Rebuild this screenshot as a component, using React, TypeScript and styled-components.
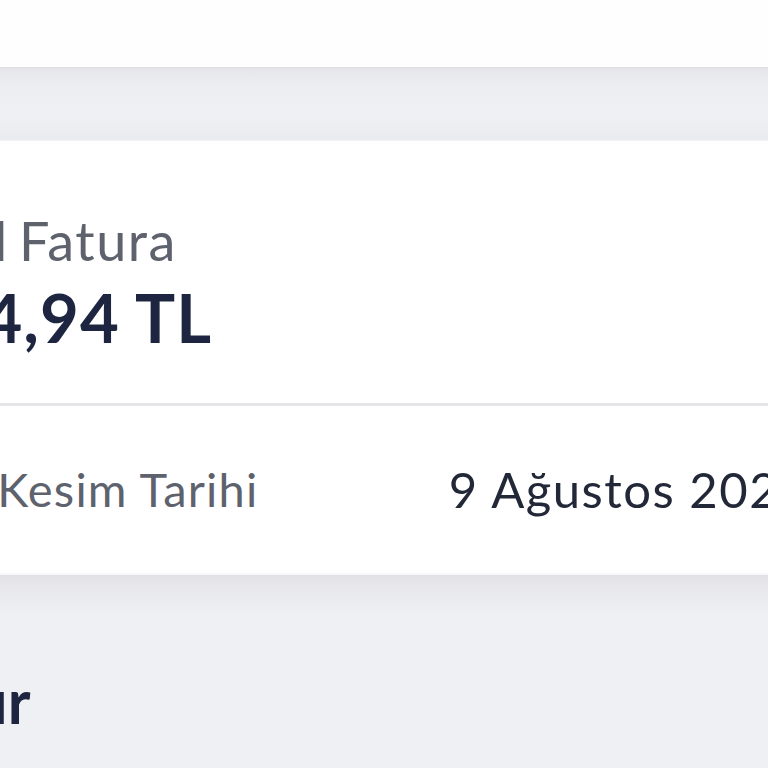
import styled, { createGlobalStyle } from "styled-components"

const Global = createGlobalStyle`
  html, body {
    margin: 0;
    padding: 0;
    background: #fefefe;
    overflow: hidden;
  }
  body {
    font-family: Lato, "Noto Sans", sans-serif;
  }
`

const App = () => {
  return (
    <>
      <Global />
      <Page>
        <Screen>
          <Header />
          <Band />
          <Card>
            <Summary>
              <Title>Güncel Fatura</Title>
              <Amount>1.254,94 TL</Amount>
            </Summary>
            <Divider />
            <Row>
              <Label>Hesap Kesim Tarihi</Label>
              <Value>9 Ağustos 2023</Value>
            </Row>
          </Card>
          <Section>
            <Heading>Hazır</Heading>
          </Section>
        </Screen>
      </Page>
    </>
  )
}

export default App

const Page = styled.div`
  width: 768px;
  height: 768px;
  overflow: hidden;
`

const Screen = styled.div`
  width: 985px;
  margin-left: -170px;
  display: flex;
  flex-direction: column;
`

const Header = styled.div`
  height: 67px;
  background: #fefefe;
`

const Band = styled.div`
  height: 74px;
  background: linear-gradient(#dcdce2 0px, #e6e6eb 2px, #eceef2 20px, #eff0f4 50px, #eaebee 72px, #f3f3f5 74px);
`

const Card = styled.div`
  background: #ffffff;
  display: flex;
  flex-direction: column;
`

const Summary = styled.div`
  height: 262px;
  box-sizing: border-box;
  padding: 68px 18px 0 17px;
  display: flex;
  flex-direction: column;
  gap: 3px;
`

const Title = styled.div`
  margin-left: -13px;
  font-size: 54px;
  line-height: 1.2;
  letter-spacing: 1.5px;
  word-spacing: -5px;
  color: #5d626d;
  white-space: nowrap;
`

const Amount = styled.div`
  font-size: 67px;
  line-height: 1.2;
  font-weight: 700;
  letter-spacing: 1px;
  color: #1d2540;
  white-space: nowrap;
`

const Divider = styled.div`
  height: 3px;
  background: #e5e5e7;
`

const Row = styled.div`
  height: 169px;
  box-sizing: border-box;
  padding: 0 6px 0 18px;
  display: flex;
  align-items: center;
  justify-content: space-between;
  border-bottom: 2px solid #f8f8fa;
`

const Label = styled.div`
  font-size: 47px;
  line-height: 1.2;
  letter-spacing: 1.2px;
  color: #5d626d;
  white-space: nowrap;
`

const Value = styled.div`
  font-size: 49px;
  line-height: 1.2;
  letter-spacing: 1.5px;
  color: #232838;
  white-space: nowrap;
`

const Section = styled.div`
  height: 200px;
  box-sizing: border-box;
  padding: 89px 18px 0 57px;
  background: linear-gradient(#e1e1e6 0px, #e8e8ec 12px, #eef0f3 40px, #eff0f4 100%);
`

const Heading = styled.div`
  font-size: 61px;
  line-height: 1.2;
  font-weight: 700;
  color: #1d2540;
  white-space: nowrap;
`
